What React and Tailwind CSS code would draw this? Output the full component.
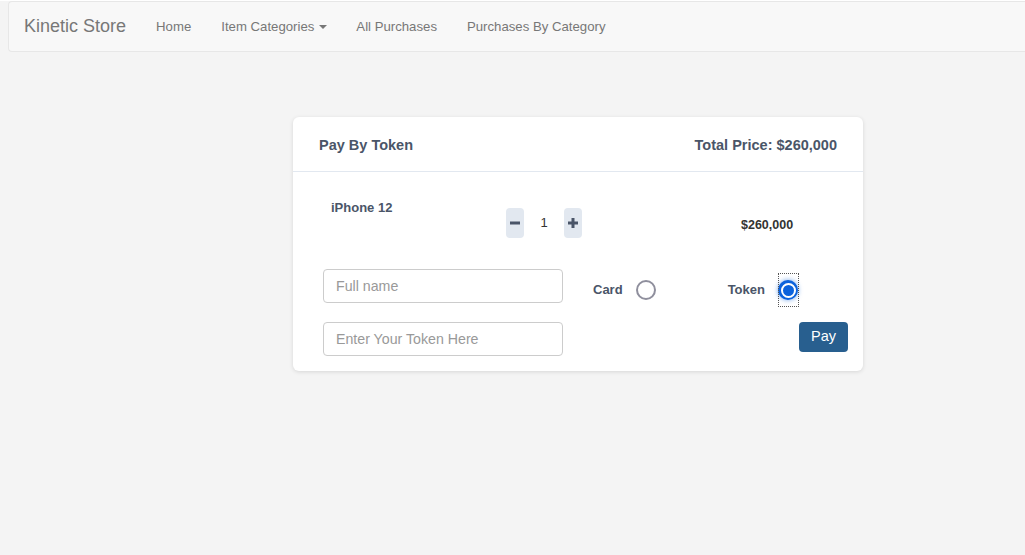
import React from 'react';

const font = { fontFamily: '"Liberation Sans", Arial, sans-serif' };

const NavBar = () => (
  <nav className="ml-2 mt-px h-[51px] flex items-center bg-[#f8f8f8] border border-r-0 border-[#e7e7e7] rounded-l">
    <a className="px-[15px] text-[18px] text-[#777]">Kinetic Store</a>
    <a className="px-[15px] pt-px text-[13.2px] text-[#777]">Home</a>
    <a className="px-[15px] pt-px text-[13.2px] text-[#777] flex items-center">
      Item Categories
      <span className="ml-[5px] w-0 h-0 border-x-4 border-x-transparent border-t-4 border-t-[#777]" />
    </a>
    <a className="pl-[14px] pr-[15px] pt-px text-[13.2px] text-[#777]">All Purchases</a>
    <a className="px-[15px] pt-px text-[13.2px] text-[#777]">Purchases By Category</a>
  </nav>
);

const QtyButton = ({ children }) => (
  <button className="w-[18px] h-[30px] rounded-[4px] bg-[#e2e8f0] flex items-center justify-center text-[#4a5568]">
    {children}
  </button>
);

const Radio = ({ checked }) =>
  checked ? (
    <span className="outline-1 outline-dotted outline-[#555] w-[19px] h-[32px] flex items-center justify-center shrink-0">
      <span className="w-5 h-5 shrink-0 rounded-full bg-[#0b62dc] flex items-center justify-center shadow-[0_0_5px_rgba(11,98,220,0.6)]">
        <span className="w-[15px] h-[15px] rounded-full border-2 border-white bg-[#0b62dc]" />
      </span>
    </span>
  ) : (
    <span className="block w-5 h-5 shrink-0 rounded-full border-2 border-[#8f8f9d] bg-white" />
  );

export default function App() {
  return (
    <div style={font} className="min-h-screen bg-[#f4f4f4] pb-10">
      <NavBar />
      <div className="ml-[293px] mt-[65px] w-[570px] bg-white rounded-md shadow-[0_1px_4px_rgba(0,0,0,0.12)]">
        <div className="h-[55px] pt-[4px] px-[26px] flex items-center justify-between border-b border-[#e2e8f0] text-[14.5px] font-bold text-[#4a5568]">
          <span>Pay By Token</span>
          <span>Total Price: $260,000</span>
        </div>
        <div className="pt-[26px] pb-[15px]">
          <div className="flex items-start pl-[38px]">
            <div className="w-[175px] text-[13px] font-bold text-[#4a5568]">iPhone 12</div>
            <div className="flex items-center mt-[10px]">
              <QtyButton>
                <svg width="10" height="10" viewBox="0 0 10 10"><rect x="0" y="3.5" width="10" height="3" fill="currentColor" /></svg>
              </QtyButton>
              <span className="w-[40px] text-center text-[13px] text-[#333]">1</span>
              <QtyButton>
                <svg width="10" height="10" viewBox="0 0 10 10"><rect x="0" y="3.5" width="10" height="3" fill="currentColor" /><rect x="3.5" y="0" width="3" height="10" fill="currentColor" /></svg>
              </QtyButton>
            </div>
            <div className="ml-[159px] mt-[18px] text-[12.5px] font-bold text-[#333]">$260,000</div>
          </div>
          <div className="mt-[31px] pl-[30px] pr-[15px] flex">
            <div className="flex flex-col gap-[19px]">
              <input placeholder="Full name" className="w-[240px] h-[34px] px-3 border border-[#ccc] rounded text-[14.2px] placeholder:text-[#999] outline-none" />
              <input placeholder="Enter Your Token Here" className="w-[240px] h-[34px] px-3 border border-[#ccc] rounded text-[14.2px] placeholder:text-[#999] outline-none" />
            </div>
            <div className="flex-1 flex flex-col">
              <div className="h-[34px] mt-[4px] flex items-center text-[13px] font-bold text-[#4a5568]">
                <span className="ml-[30px]">Card</span>
                <span className="ml-[13px]"><Radio /></span>
                <span className="ml-[72px]">Token</span>
                <span className="ml-[14px]"><Radio checked /></span>
              </div>
              <div className="mt-[15px] flex justify-end">
                <button className="h-[30px] px-[12px] rounded-[4px] bg-[#285f8f] text-white text-[14.5px]">Pay</button>
              </div>
            </div>
          </div>
        </div>
      </div>
    </div>
  );
}
